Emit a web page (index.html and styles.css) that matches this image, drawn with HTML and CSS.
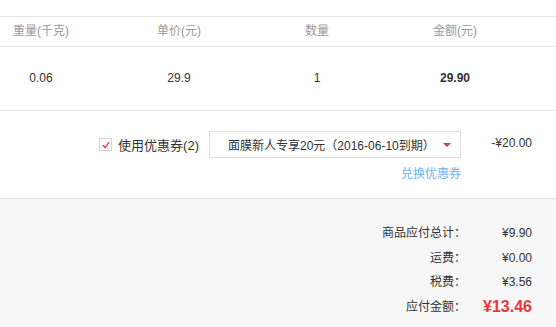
FILE: index.html
```html
<!DOCTYPE html>
<html lang="zh-CN">
<head>
    <meta charset="utf-8">
    <title>订单确认</title>
    <link rel="stylesheet" href="styles.css">
</head>
<body>
    <div class="order">
        <div class="grid-row head">
            <div>重量(千克)</div>
            <div>单价(元)</div>
            <div>数量</div>
            <div>金额(元)</div>
        </div>
        <div class="grid-row item">
            <div>0.06</div>
            <div>29.9</div>
            <div>1</div>
            <div class="amount">29.90</div>
        </div>

        <div class="coupon">
            <label class="use-coupon">
                <span class="check">
                    <svg width="10" height="10" viewBox="0 0 10 10"><path d="M2 5.2 L4.2 7.6 L8 2" fill="none" stroke="#e4393c" stroke-width="1.3"/></svg>
                </span>
                使用优惠券(2)
            </label>
            <div class="select">
                <span>面膜新人专享20元（2016-06-10到期）</span>
                <i class="arrow"></i>
            </div>
            <div class="discount">-¥20.00</div>
            <a class="exchange" href="#">兑换优惠券</a>
        </div>

        <div class="summary">
            <div class="line"><span>商品应付总计：</span><span>¥9.90</span></div>
            <div class="line"><span>运费：</span><span>¥0.00</span></div>
            <div class="line"><span>税费：</span><span>¥3.56</span></div>
            <div class="line total"><span>应付金额：</span><span class="pay">¥13.46</span></div>
        </div>
    </div>
</body>
</html>
```

FILE: styles.css
```css
body {
    margin: 0;
    padding: 0;
    background: #fff;
    font-family: "Liberation Sans", Arial, "Noto Sans CJK SC", sans-serif;
    font-size: 12px;
    color: #333;
    overflow: hidden;
}
.order {
    padding-top: 16px;
}
.grid-row {
    display: grid;
    grid-template-columns: repeat(4, 138px);
    margin-left: -28px;
    text-align: center;
    border-bottom: 1px solid #e6e6e6;
}
.head {
    border-top: 1px solid #e6e6e6;
    height: 29px;
    line-height: 29px;
    color: #999;
}
.item {
    height: 63px;
    line-height: 63px;
}
.item .amount {
    font-weight: bold;
}
.coupon {
    display: grid;
    grid-template-columns: auto 252px 71px;
    justify-content: end;
    align-content: start;
    align-items: center;
    padding: 20px 24px 0 0;
    height: 67px;
    border-bottom: 1px solid #e6e6e6;
}
.use-coupon {
    display: flex;
    align-items: center;
    gap: 6px;
    margin-right: 10px;
    font-size: 13px;
    color: #333;
}
.check {
    width: 11px;
    height: 11px;
    border: 1px solid #d5d5d5;
    display: flex;
    align-items: center;
    justify-content: center;
    background: #fff;
}
.select {
    height: 25px;
    border: 1px solid #ddd;
    display: flex;
    align-items: center;
    justify-content: space-between;
    padding: 0 9px 0 18px;
    font-size: 12px;
    white-space: nowrap;
}
.arrow {
    width: 0;
    height: 0;
    border-left: 4px solid transparent;
    border-right: 4px solid transparent;
    border-top: 4px solid #e4393c;
}
.discount {
    text-align: right;
    align-self: start;
    line-height: 24px;
}
.exchange {
    grid-column: 2;
    justify-self: end;
    margin-top: 8px;
    color: #6cb4f0;
    text-decoration: none;
    line-height: 16px;
}
.summary {
    background: #f7f7f7;
    padding: 22px 24px 0 0;
    height: 120px;
}
.line {
    display: grid;
    grid-template-columns: auto 66px;
    justify-content: end;
    line-height: 24.5px;
    text-align: right;
}
.total .pay {
    color: #e4393c;
    font-size: 16px;
    font-weight: bold;
}
```
